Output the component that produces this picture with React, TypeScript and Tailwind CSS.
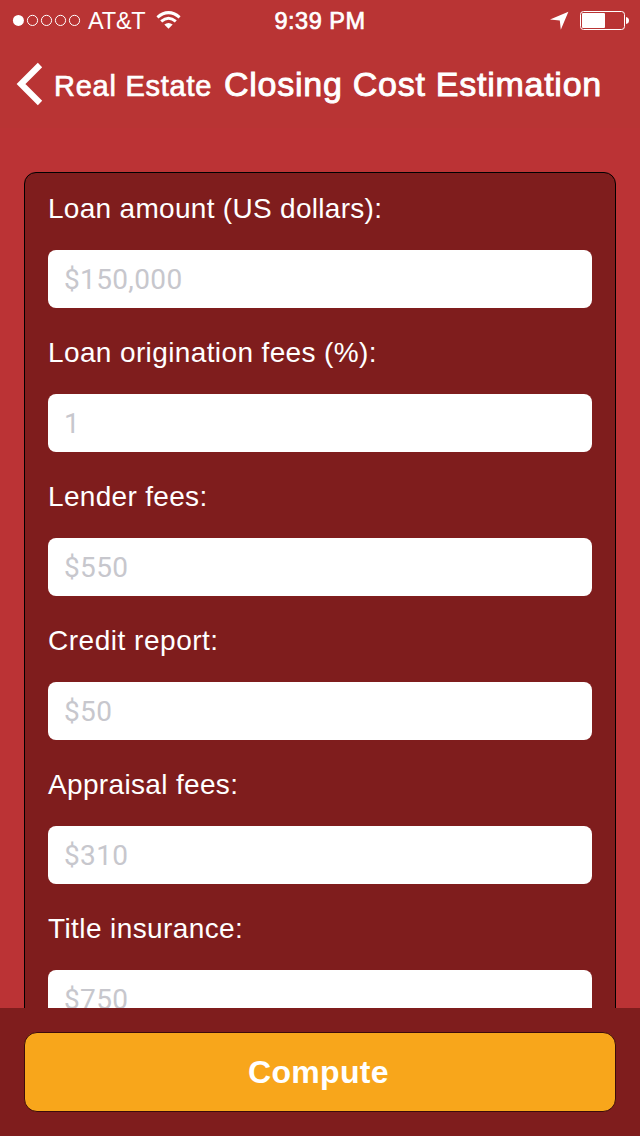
import { useState } from "react";

const fields = [
  { id: "loan", label: "Loan amount (US dollars):", placeholder: "$150,000", tracking: "tracking-[0.3px]" },
  { id: "origination", label: "Loan origination fees (%):", placeholder: "1", tracking: "tracking-[0.38px]" },
  { id: "lender", label: "Lender fees:", placeholder: "$550", tracking: "tracking-[0.32px]" },
  { id: "credit", label: "Credit report:", placeholder: "$50", tracking: "tracking-[0.52px]" },
  { id: "appraisal", label: "Appraisal fees:", placeholder: "$310", tracking: "tracking-[0.34px]" },
  { id: "title", label: "Title insurance:", placeholder: "$750", tracking: "tracking-[0.4px]" },
];

function StatusBar() {
  return (
    <div className="grid h-10 grid-cols-3 items-center">
      <div className="flex items-center pl-3">
        <svg width="70" height="12" viewBox="0 0 70 12" fill="none" stroke="white">
          <circle cx="6.4" cy="6.4" r="5.5" fill="white" stroke="none" />
          <circle cx="20.5" cy="6.4" r="5.1" />
          <circle cx="34.5" cy="6.4" r="5.1" />
          <circle cx="48.5" cy="6.4" r="5.1" />
          <circle cx="62.5" cy="6.4" r="5.1" />
        </svg>
        <span className="ml-1.5 w-[58px] whitespace-nowrap pt-0.5 text-[23.5px] leading-[38px] tracking-[-0.2px]">AT&amp;T</span>
        <svg className="ml-2.5" width="26" height="20" viewBox="0 0 26 20">
          <path d="M12.5 18.8 L8.3 14.6 Q12.5 11.4 16.7 14.6 Z" fill="white" />
          <path d="M5.2 11.4 Q12.5 5.2 19.8 11.4" fill="none" stroke="white" strokeWidth="3" />
          <path d="M1.4 7.3 Q12.5 -2.1 23.6 7.3" fill="none" stroke="white" strokeWidth="3" />
        </svg>
      </div>
      <span className="pt-0.5 text-center text-[23.5px] leading-[38px] tracking-[0.5px] [-webkit-text-stroke:0.7px_white]">9:39 PM</span>
      <div className="flex items-center justify-end pr-2.5">
        <svg width="80" height="20" viewBox="0 0 80 20">
          <path d="M18.4 1.8 L10.8 19.8 L9.8 10.4 L0 9.6 Z" fill="white" />
          <rect x="30.5" y="1.5" width="44" height="18" rx="3" fill="none" stroke="white" />
          <rect x="32" y="3" width="23" height="15" rx="1" fill="white" />
          <path d="M76 7 Q79 7.5 79 10.5 Q79 13.5 76 14 Z" fill="white" />
        </svg>
      </div>
    </div>
  );
}

function NavBar() {
  return (
    <div className="flex h-[88px] items-center whitespace-nowrap">
      <button className="flex items-center pl-4">
        <svg width="28" height="44" viewBox="0 0 28 44" fill="none" stroke="white" strokeWidth="6.2">
          <path d="M24 3 L5 22 L24 41" />
        </svg>
        <span className="ml-2.5 w-[158px] pt-1 text-left text-[29px] leading-10 tracking-[0.75px] [-webkit-text-stroke:0.7px_white]">Real Estate</span>
      </button>
      <h1 className="ml-3 text-[34px] leading-[44px] tracking-[0.74px] [-webkit-text-stroke:0.9px_white]">Closing Cost Estimation</h1>
    </div>
  );
}

export default function App() {
  const [values, setValues] = useState<Record<string, string>>({});

  return (
    <div className="flex h-[1136px] w-[640px] flex-col overflow-hidden bg-[#bb3335] font-['Liberation_Sans',Arial,sans-serif] text-white">
      <header className="h-32 shrink-0 bg-[#b93434]">
        <StatusBar />
        <NavBar />
      </header>

      <main className="min-h-0 flex-1 overflow-hidden px-6 pt-11">
        <div className="rounded-xl border border-black bg-[#7f1d1d] px-[23px] pt-[5px]">
          {fields.map((field) => (
            <div key={field.id} className="h-36">
              <label htmlFor={field.id} className={`block h-[72px] text-[28px] leading-[62px] ${field.tracking}`}>
                {field.label}
              </label>
              <input
                id={field.id}
                value={values[field.id] || ""}
                onChange={(e) => setValues({ ...values, [field.id]: e.target.value })}
                placeholder={field.placeholder}
                className="block h-[58px] w-full rounded-lg bg-white px-4 font-[Roboto,sans-serif] text-[28px] tracking-[0.35px] text-black outline-none placeholder:text-[#c7c7cd]"
              />
            </div>
          ))}
        </div>
      </main>

      <footer className="h-32 shrink-0 bg-[#7f1d1d] px-6 pt-6">
        <button className="block h-20 w-full rounded-[13px] border border-[#3d0c0c] bg-[#f8a61b] pr-[3px] text-[32px] font-bold leading-[78px] tracking-[0.3px]">
          Compute
        </button>
      </footer>
    </div>
  );
}
